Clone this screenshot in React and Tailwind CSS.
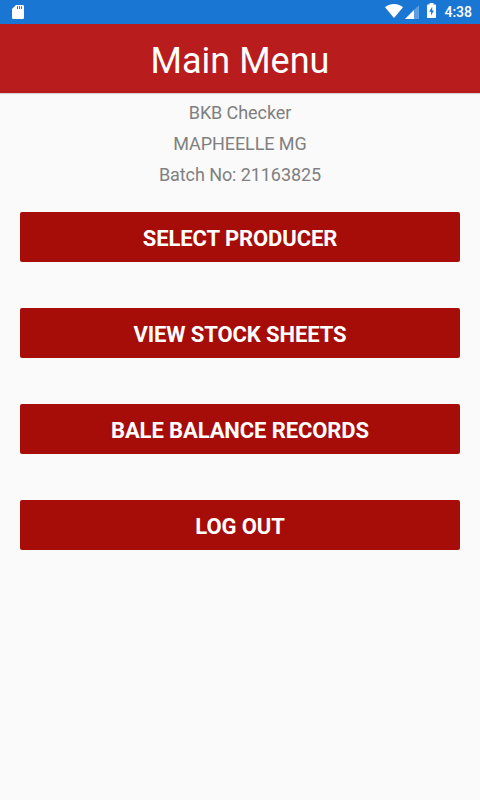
import React from 'react'

const menuItems = ['Select Producer', 'View Stock Sheets', 'Bale Balance Records', 'Log Out']

const details = ['BKB Checker', 'MAPHEELLE MG', 'Batch No: 21163825']

const StatusBar = () => (
  <div className="h-6 bg-[#1976d2] flex items-start justify-between pl-3 pr-2">
    {/* SD card */}
    <svg className="w-3 h-[14px] mt-[5px]" viewBox="0 0 12 14" fill="#fff">
      <path fillRule="evenodd" d="M4 0h6.800A1.200 1.200 0 0 1 12 1.200v11.600a1.200 1.200 0 0 1-1.200 1.200H1.200A1.200 1.200 0 0 1 0 12.800V4zM5 1.300V4h1V1.300zM7 1.300V4h1V1.300zM9 1.300V4h1V1.300z" />
    </svg>
    <div className="flex items-start">
      {/* Wifi */}
      <svg className="w-[18px] h-[14px] mt-1" viewBox="0 0 18 14" fill="#fff">
        <path d="M9 14 0 3.200C2 1.300 5.200 0 9 0s7 1.300 9 3.200z" />
      </svg>
      {/* Mobile signal */}
      <svg className="w-[14px] h-[14px] mt-[5px] ml-[2px]" viewBox="0 0 14 14">
        <path d="M0 14 14 0v14z" fill="#fff" fillOpacity=".3" />
        <path d="M0 14 9 5v9z" fill="#fff" />
      </svg>
      {/* Battery */}
      <svg className="w-[9px] h-[15px] mt-[3px] ml-2" viewBox="0 0 9 15" fill="#fff">
        <path d="M2.500 0h4v1.500h1.800a.7.7 0 0 1 .7.7v12.100a.7.7 0 0 1-.7.7H.7a.7.7 0 0 1-.7-.7V2.200a.7.7 0 0 1 .7-.7h1.800z" />
        <path d="M5.200 3.800 2.200 8.700h1.900v3.800l2.800-5H5.200z" fill="#1976d2" />
      </svg>
      <span className="w-9 pt-[2px] text-right text-[14px] leading-5 font-medium text-white">4:38</span>
    </div>
  </div>
)

const MenuButton = ({ label }) => (
  <button className="block w-full h-[50px] pt-[2px] rounded-[2px] bg-[#a60c08] text-[22px] font-bold tracking-[-0.1px] text-white uppercase">
    {label}
  </button>
)

const App = () => (
  <div className="w-[480px] h-[800px] bg-[#fafafa] overflow-hidden font-[Roboto,sans-serif]">
    <StatusBar />
    <header className="h-[69px] pt-1 bg-[#b91c1c] shadow-[0_1px_1px_rgba(0,0,0,0.15)] flex items-center justify-center">
      <h1 className="text-[36px] text-white">Main Menu</h1>
    </header>
    <div className="pt-1 text-center text-[18px] leading-[31px] tracking-[-0.08px] text-[#808080]">
      {details.map((line) => (
        <p key={line}>{line}</p>
      ))}
    </div>
    <main className="px-5 pt-[22px] space-y-[46px]">
      {menuItems.map((item) => (
        <MenuButton key={item} label={item} />
      ))}
    </main>
  </div>
)

export default App
